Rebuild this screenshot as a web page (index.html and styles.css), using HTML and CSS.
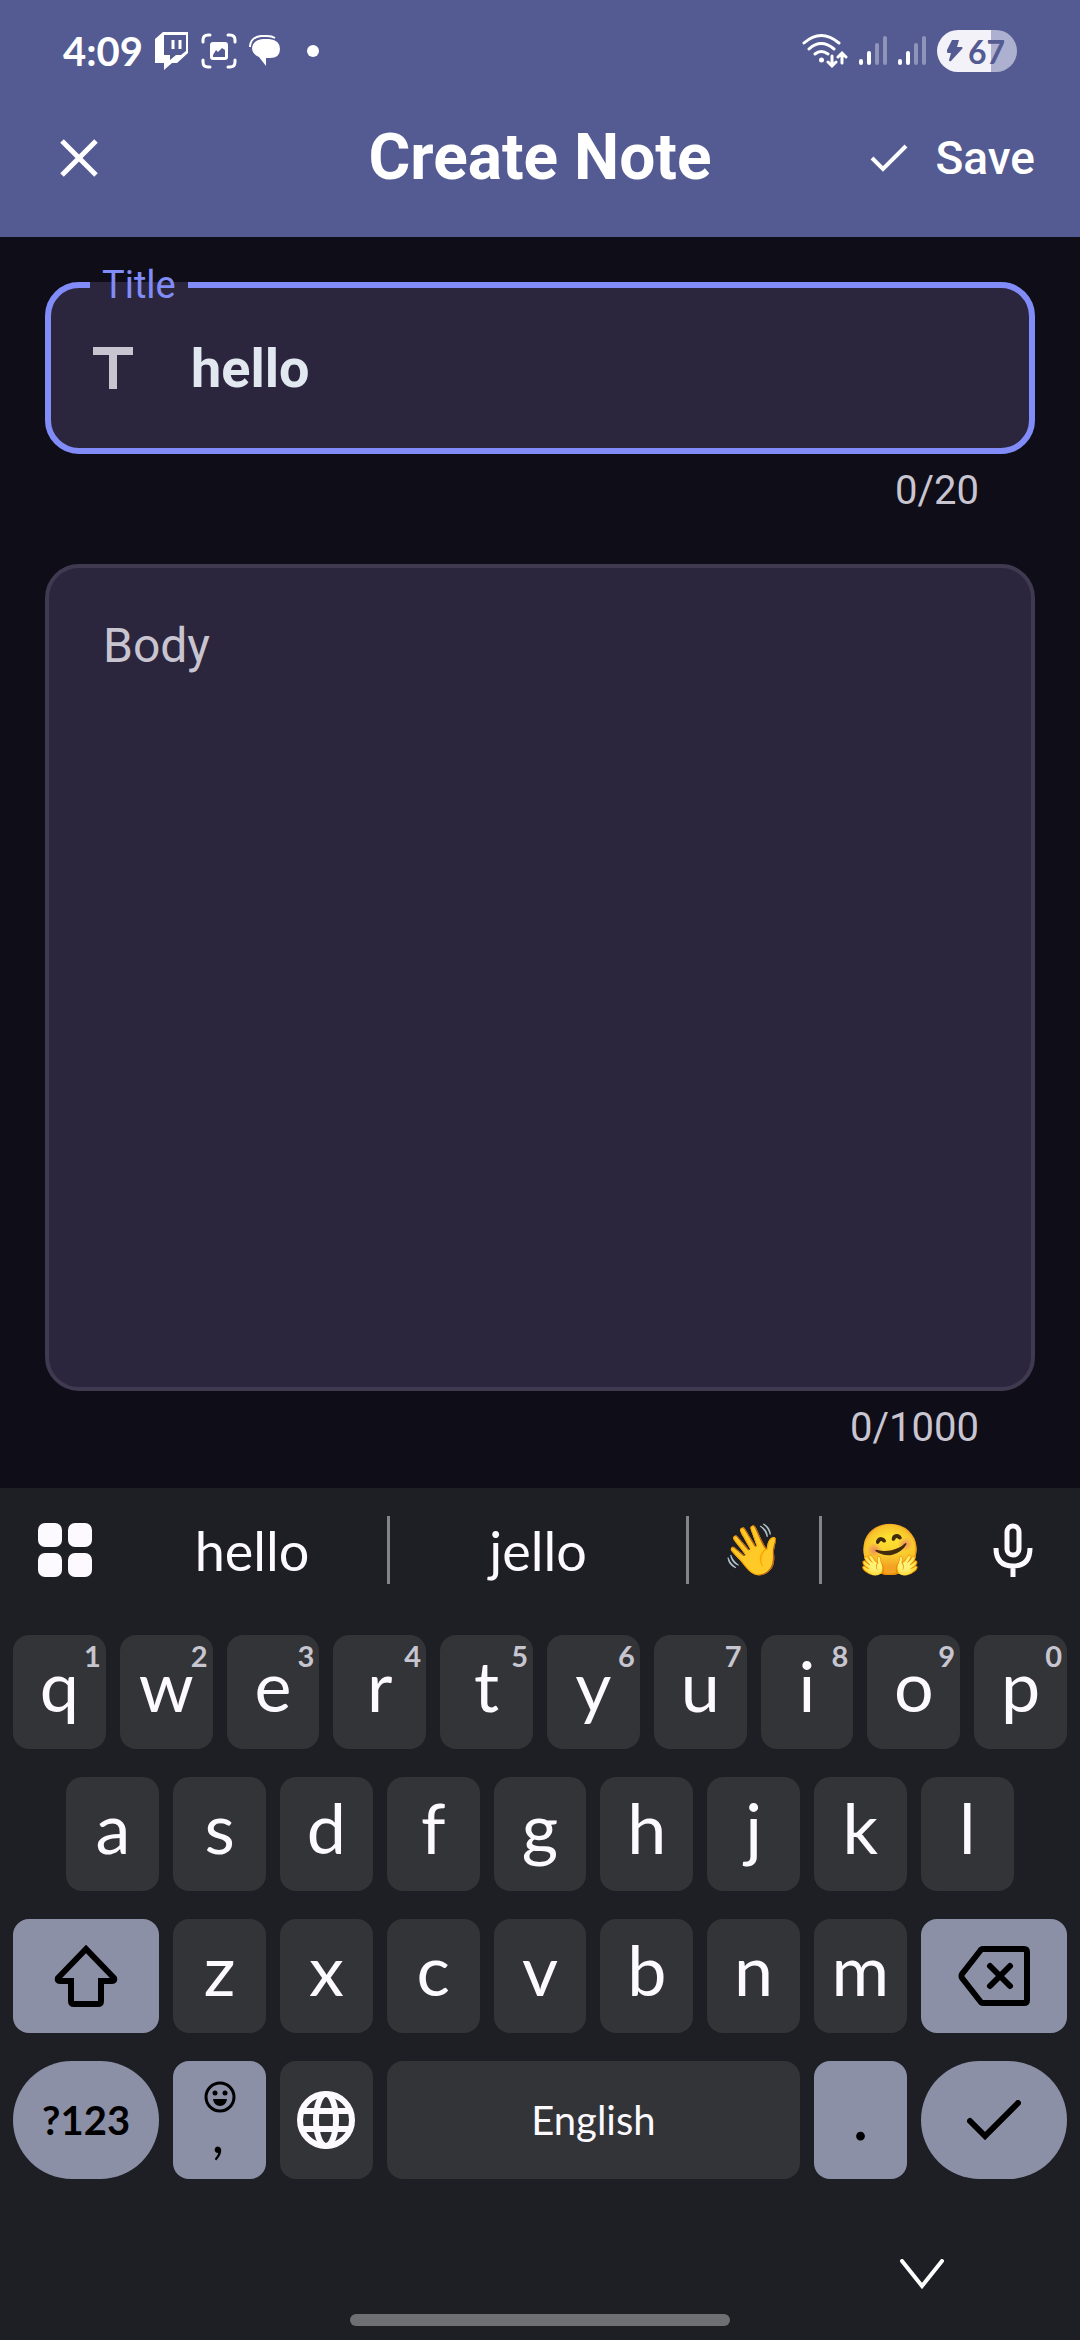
FILE: index.html
```html
<!DOCTYPE html>
<html lang="en">
<head>
<meta charset="utf-8">
<meta name="viewport" content="width=device-width, initial-scale=1">
<title>Create Note</title>
<link rel="stylesheet" href="styles.css">
</head>
<body class="screen">
<header class="header">
  <div class="status">
    <div class="status-side">
      <time class="clock">4:09</time>
      <svg width="34" height="38" viewBox="0 0 34 38" fill="none"><path fill="#fff" fill-rule="evenodd" d="M8 0h25v21L22 31h-5l-8 7v-7H0V7zM9 3v20h6v5l6-5h5l5-4V3z"/><path stroke="#fff" stroke-width="3" d="M18 8v9M25 8v9"/></svg>
      <svg width="36" height="36" viewBox="0 0 36 36" fill="none"><path stroke="#fff" stroke-width="3" stroke-linecap="round" d="M2 9V7q0-5 5-5h2M27 2h2q5 0 5 5v2M34 27v2q0 5-5 5h-2M9 34H7q-5 0-5-5v-2"/><path fill="#fff" fill-rule="evenodd" d="M12 9h12q3 0 3 3v12q0 3-3 3H12q-3 0-3-3V12q0-3 3-3zM12 22v2h12v-7l-3-2-4 4-2-2z"/></svg>
      <svg width="32" height="32" viewBox="0 0 32 32" fill="none"><path stroke="#fff" stroke-width="2" d="M1 12V11Q2 2 12 1h6q5 0 8 2"/><path fill="#fff" d="M14 4h6q11 1 11 10t-10 9h-4v8l-7-9Q3 19 3 13 4 5 14 4z"/></svg>
      <svg class="status-dot" width="12" height="12" viewBox="0 0 12 12"><circle cx="6" cy="6" r="6" fill="#fff"/></svg>
    </div>
    <div class="status-side status-right">
      <svg width="46" height="36" viewBox="0 0 46 36" fill="none" stroke="#fff" stroke-width="3" stroke-linecap="round"><path d="M2 10q17-15 35 0M7 16q12-11 25 0M13 21q6-5 13 0M30 23v9M26 29l4 4 4-4M40 30V20M36 24l4-4 4 4"/><circle cx="19.500" cy="27" r="2.500" fill="#fff" stroke="none"/></svg>
      <svg width="28" height="30" viewBox="0 0 28 30" stroke="#fff" stroke-width="4" stroke-linecap="round"><path d="M2 25v2M10 17v10"/><path opacity=".35" d="M18 9v18M26 2v25"/></svg>
      <svg width="28" height="30" viewBox="0 0 28 30" stroke="#fff" stroke-width="4" stroke-linecap="round"><path d="M2 25v2M10 17v10"/><path opacity=".35" d="M18 9v18M26 2v25"/></svg>
      <div class="battery">
        <svg width="16" height="22" viewBox="0 0 16 22"><path fill="#545b92" d="M5 0h7l-2 7h5q1 1 0 2L4 21q-2 1-2-1l2-7H1q-2-1-1-3z"/></svg>
        <span>67</span>
      </div>
    </div>
  </div>
  <div class="app-bar">
    <button class="bar-button close" type="button" aria-label="Close"><svg width="38" height="38" viewBox="0 0 38 38" fill="none" stroke="#fff" stroke-width="5"><path d="M2 2l34 34M36 2L2 36"/></svg></button>
    <h1 class="heading">Create Note</h1>
    <button class="bar-button save" type="submit" form="note"><svg width="38" height="28" viewBox="0 0 38 28" fill="none" stroke="#fff" stroke-width="4"><path d="M2 14l11 11L36 2"/></svg>Save</button>
  </div>
</header>

<form class="note" id="note">
  <fieldset class="title-field">
    <legend class="title-legend"><label for="title">Title</label></legend>
    <div class="title-row">
      <svg width="40" height="42" viewBox="0 0 40 42" aria-hidden="true"><path fill="#c9c5d0" d="M0 0h40v8H24v34h-8V8H0z"/></svg>
      <input class="title-input" id="title" type="text" value="hello">
    </div>
  </fieldset>
  <p class="counter">0/20</p>
  <textarea class="body-input" aria-label="Body" placeholder="Body"></textarea>
  <p class="counter">0/1000</p>
</form>

<section class="keyboard" aria-label="Keyboard">
  <div class="suggestions">
    <button class="tool" type="button" aria-label="Keyboard menu"><svg width="54" height="54" viewBox="0 0 54 54" fill="#fcf9ff"><rect width="24" height="24" rx="7"/><rect x="30" width="24" height="24" rx="7"/><rect y="30" width="24" height="24" rx="7"/><rect x="30" y="30" width="24" height="24" rx="7"/></svg></button>
    <button class="word" type="button">hello</button>
    <button class="word divided" type="button">jello</button>
    <button class="emoji divided" type="button">👋</button>
    <button class="emoji divided" type="button">🤗</button>
    <button class="tool" type="button" aria-label="Voice input"><svg width="40" height="54" viewBox="0 0 40 54" fill="none" stroke="#fcf9ff" stroke-width="5"><rect x="14" y="3" width="12" height="29" rx="6"/><path d="M3 25q0 18 17 18t17-18M20 43v11"/></svg></button>
  </div>
  <div class="keys">
    <button class="key letter" type="button">q<span class="hint">1</span></button>
    <button class="key letter" type="button">w<span class="hint">2</span></button>
    <button class="key letter" type="button">e<span class="hint">3</span></button>
    <button class="key letter" type="button">r<span class="hint">4</span></button>
    <button class="key letter" type="button">t<span class="hint">5</span></button>
    <button class="key letter" type="button">y<span class="hint">6</span></button>
    <button class="key letter" type="button">u<span class="hint">7</span></button>
    <button class="key letter" type="button">i<span class="hint">8</span></button>
    <button class="key letter" type="button">o<span class="hint">9</span></button>
    <button class="key letter" type="button">p<span class="hint">0</span></button>

    <button class="key letter indent" type="button">a</button>
    <button class="key letter" type="button">s</button>
    <button class="key letter" type="button">d</button>
    <button class="key letter" type="button">f</button>
    <button class="key letter" type="button">g</button>
    <button class="key letter" type="button">h</button>
    <button class="key letter" type="button">j</button>
    <button class="key letter" type="button">k</button>
    <button class="key letter" type="button">l</button>

    <button class="key wide accent" type="button" aria-label="Shift"><svg width="64" height="62" viewBox="0 0 64 62" fill="none" stroke="#000" stroke-width="6"><path d="M32 4L4 33q-1 3 2 3h11v20q0 3 3 3h24q3 0 3-3V36h11q3 0 2-3z"/></svg></button>
    <button class="key letter" type="button">z</button>
    <button class="key letter" type="button">x</button>
    <button class="key letter" type="button">c</button>
    <button class="key letter" type="button">v</button>
    <button class="key letter" type="button">b</button>
    <button class="key letter" type="button">n</button>
    <button class="key letter" type="button">m</button>
    <button class="key wide accent" type="button" aria-label="Backspace"><svg width="72" height="60" viewBox="0 0 72 60" fill="none" stroke="#000" stroke-width="6"><path d="M25 3h41q3 0 3 3v48q0 3-3 3H25q-2 0-3-2L4 32q-1-2 0-4L22 5q1-2 3-2z"/><path stroke-linecap="round" d="M32 20l20 20M52 20L32 40"/></svg></button>

    <button class="key bottom wide accent round symbols" type="button">?123</button>
    <button class="key bottom accent stacked" type="button" aria-label="Emoji and comma"><svg width="32" height="32" viewBox="0 0 32 32"><circle cx="16" cy="16" r="14" fill="none" stroke="#000" stroke-width="3"/><circle cx="11" cy="12" r="2.500"/><circle cx="21" cy="12" r="2.500"/><path d="M9 18h14q-1 7-7 7t-7-7z"/></svg><span class="comma">,</span></button>
    <button class="key bottom" type="button" aria-label="Change language"><svg width="58" height="58" viewBox="0 0 58 58" fill="none" stroke="#fcf9ff" stroke-width="6"><circle cx="29" cy="29" r="26"/><ellipse cx="29" cy="29" rx="10" ry="26"/><path d="M5 20h48M5 38h48"/></svg></button>
    <button class="key bottom space" type="button">English</button>
    <button class="key bottom letter accent" type="button">.</button>
    <button class="key bottom wide accent round" type="button" aria-label="Done"><svg width="54" height="40" viewBox="0 0 54 40" fill="none" stroke="#000" stroke-width="6" stroke-linecap="round"><path d="M3 21l15 15L51 3"/></svg></button>
  </div>
  <div class="dismiss">
    <button class="tool" type="button" aria-label="Hide keyboard"><svg width="44" height="30" viewBox="0 0 44 30" fill="none" stroke="#fff" stroke-width="4" stroke-linecap="round"><path d="M2 2l20 25L42 2"/></svg></button>
  </div>
  <div class="home-bar"></div>
</section>
</body>
</html>
```

FILE: styles.css
```css
* {
  box-sizing: border-box;
}

.screen {
  display: flex;
  flex-direction: column;
  min-height: 100vh;
  margin: 0;
  background: #0f0d18;
  color: #fff;
  font-family: Roboto, sans-serif;
}

button {
  display: flex;
  align-items: center;
  justify-content: center;
  margin: 0;
  padding: 0;
  border: 0;
  background: none;
  color: inherit;
  font: inherit;
}

svg {
  display: block;
  flex: none;
}

/* Header */

.header {
  padding-bottom: 24px;
  background: #545b92;
}

.status {
  display: flex;
  align-items: center;
  justify-content: space-between;
  height: 102px;
  padding: 0 63px;
}

.status-side {
  display: flex;
  align-items: center;
  gap: 12px;
}

.status-right {
  gap: 11px;
}

.clock {
  font-family: Lato, sans-serif;
  font-size: 40px;
  font-weight: 700;
}

.status-dot {
  margin-left: 14px;
}

.battery {
  display: flex;
  align-items: center;
  gap: 5px;
  height: 42px;
  padding: 0 12px 0 10px;
  border-radius: 21px;
  background: linear-gradient(90deg, #f2f2f8 67%, #adb0ce 67%);
  color: #545b92;
  font-family: Lato, sans-serif;
  font-size: 32px;
  font-weight: 700;
}

.app-bar {
  display: grid;
  grid-template-columns: 1fr auto 1fr;
  align-items: center;
  height: 111px;
  padding: 0 45px;
}

.bar-button {
  gap: 28px;
  font-size: 46px;
  font-weight: 500;
}

.close {
  justify-self: start;
  padding: 0 15px;
}

.save {
  justify-self: end;
}

.heading {
  margin: 0;
  font-size: 64px;
  font-weight: 700;
}

/* Note form */

.note {
  display: flex;
  flex: 1;
  flex-direction: column;
  padding: 28px 45px 37px;
  color: #c9c5d0;
}

.title-field {
  min-width: 0;
  margin: 0;
  padding: 0 42px 17px;
  border: 6px solid #818cf8;
  border-radius: 34px;
  background: #2b263e;
}

.title-legend {
  margin-left: -3px;
  padding: 0 12px;
  color: #818cf8;
  font-size: 38px;
  line-height: 40px;
}

.title-row {
  display: flex;
  align-items: center;
  gap: 58px;
  height: 126px;
}

.title-input {
  flex: 1;
  min-width: 0;
  padding: 0;
  border: 0;
  outline: 0;
  background: none;
  color: #e2e8f0;
  font: 700 54px Roboto, sans-serif;
}

.counter {
  margin: 14px 56px 0;
  font-size: 40px;
  line-height: 46px;
  text-align: right;
}

.body-input {
  flex: 1;
  min-height: 200px;
  margin-top: 50px;
  padding: 50px 54px;
  border: 4px solid #3f3a50;
  border-radius: 34px;
  outline: 0;
  background: #2b263e;
  color: #e2e8f0;
  font: 48px/56px Roboto, sans-serif;
  resize: none;
}

.body-input::placeholder {
  color: #c9c5d0;
  opacity: 1;
}

/* Keyboard */

.keyboard {
  padding: 0 13px 14px;
  background: #1e1f24;
  color: #fcf9ff;
  font-family: Lato, sans-serif;
}

.suggestions {
  display: grid;
  grid-template-columns: 104px 5fr 299px 133px 140px 2fr;
  align-items: center;
  height: 147px;
  padding-bottom: 23px;
}

.word,
.emoji {
  height: 68px;
  font-size: 54px;
}

.emoji {
  font-family: "Noto Color Emoji", Lato, sans-serif;
  font-size: 50px;
}

.divided {
  border-left: 3px solid #84838c;
}

.keys {
  display: grid;
  grid-template-columns: repeat(20, 1fr);
  gap: 28px 14px;
}

.key {
  position: relative;
  grid-column: span 2;
  height: 114px;
  border-radius: 16px;
  background: #333438;
  font-size: 40px;
}

.letter {
  padding-bottom: 14px;
  font-size: 70px;
  line-height: 84px;
}

.hint {
  position: absolute;
  top: 5px;
  right: 5px;
  color: #c6c5d0;
  font-size: 29px;
  font-weight: 700;
  line-height: 32px;
}

.indent {
  grid-column: 2 / span 2;
}

.wide {
  grid-column: span 3;
}

.space {
  grid-column: span 8;
}

.accent {
  background: #8b90a7;
  color: #000;
}

.bottom {
  height: 118px;
}

.round {
  border-radius: 59px;
}

.symbols {
  font-weight: 700;
}

.stacked {
  flex-direction: column;
  justify-content: space-between;
  padding: 20px 0 38px;
}

.comma {
  font-size: 54px;
  font-style: italic;
  line-height: 40px;
}

.dismiss {
  display: flex;
  justify-content: flex-end;
  padding: 80px 123px 25px 0;
}

.home-bar {
  width: 36%;
  height: 12px;
  margin: 0 auto;
  border-radius: 6px;
  background: #6e6f73;
}
```
